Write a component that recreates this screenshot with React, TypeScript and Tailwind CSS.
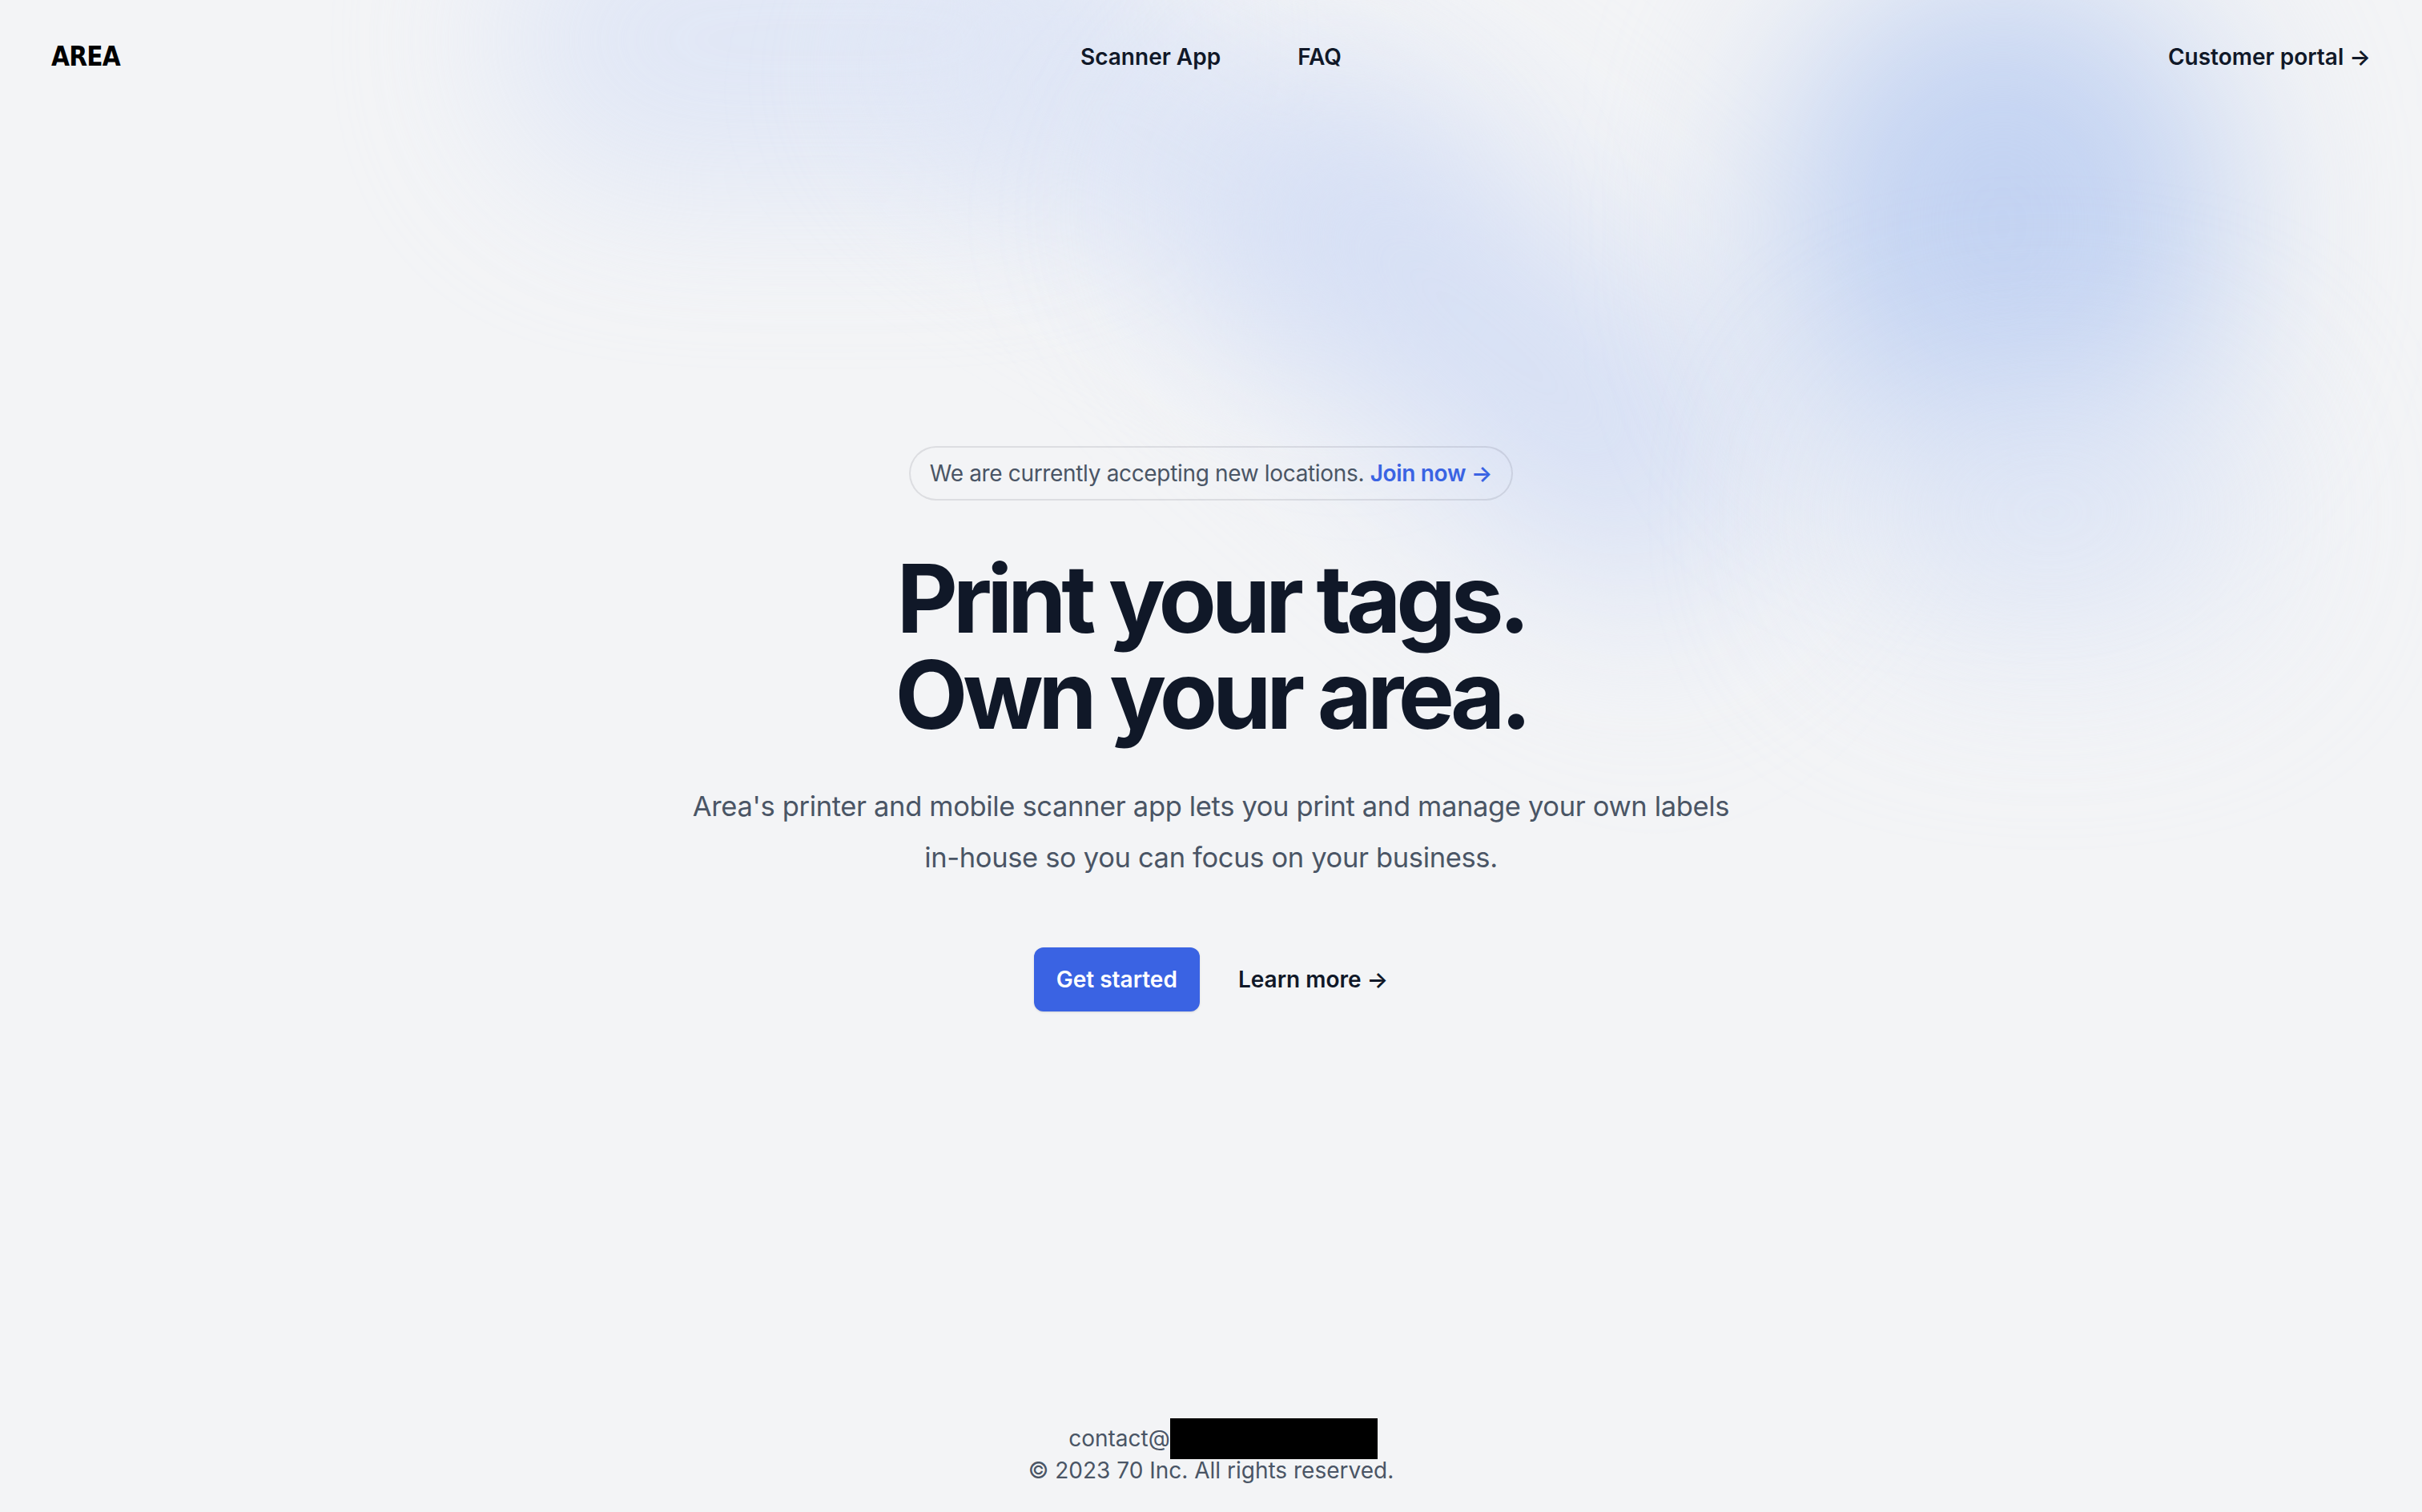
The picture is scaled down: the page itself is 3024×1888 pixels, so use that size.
import React from "react";

const navLinks = ["Scanner App", "FAQ"];

function Backdrop() {
  return (
    <div aria-hidden="true" className="pointer-events-none absolute inset-0 overflow-hidden">
      <div className="absolute left-[620px] top-[-140px] h-[380px] w-[820px] rounded-full bg-[#dce4f6] opacity-80 blur-[100px]" />
      <div className="absolute left-[1120px] top-[60px] h-[260px] w-[700px] rotate-[30deg] rounded-full bg-[#dfe6f6] blur-[100px]" />
      <div className="absolute left-[1450px] top-[260px] h-[320px] w-[820px] rotate-[40deg] rounded-full bg-[#d4def5] blur-[120px]" />
      <div className="absolute left-[2220px] top-[-40px] h-[640px] w-[560px] rounded-full bg-[#c3d3f2] blur-[110px]" />
      <div className="absolute left-[2300px] top-[480px] h-[320px] w-[520px] rounded-full bg-[#dde5f6] opacity-80 blur-[120px]" />
    </div>
  );
}

export default function App() {
  return (
    <div className="relative flex min-h-screen flex-col overflow-hidden bg-[#f3f4f6] font-['Inter','Noto_Sans',sans-serif] text-gray-900">
      <Backdrop />

      <header className="relative z-10 flex items-center justify-between px-16 pb-12 pt-[47px]">
        <div className="flex flex-1">
          <a href="#" className="font-['Liberation_Sans_Narrow','DejaVu_Sans_Condensed','Liberation_Sans',sans-serif] text-[33px] font-bold leading-[48px] tracking-tight text-black [font-stretch:condensed]">
            AREA
          </a>
        </div>
        <nav className="flex gap-x-24">
          {navLinks.map((link) => (
            <a key={link} href="#" className="text-[28px] font-semibold leading-[48px] text-gray-900">
              {link}
            </a>
          ))}
        </nav>
        <div className="flex flex-1 justify-end">
          <a href="#" className="text-[28px] font-semibold leading-[48px] text-gray-900">
            Customer portal <span aria-hidden="true">&rarr;</span>
          </a>
        </div>
      </header>

      <main className="relative z-10 flex flex-1 flex-col items-center pt-[416px]">
        <div className="mx-auto max-w-[1344px] text-center">
          <div className="mb-16 flex justify-center">
            <div className="rounded-full px-6 py-2 text-[28px] leading-[48px] tracking-[-0.012em] text-gray-600 ring-2 ring-gray-900/10">
              We are currently accepting new locations.{" "}
              <a href="#" className="font-semibold text-[#3a63e3]">
                Join now <span aria-hidden="true">&rarr;</span>
              </a>
            </div>
          </div>
          <h1 className="text-[118px] font-bold leading-[120px] tracking-[-0.053em] text-gray-900">
            Print your tags.
            <br />
            Own your area.
          </h1>
          <p className="mt-12 text-[34.5px] leading-[64px] tracking-[-0.01em] text-gray-600">
            Area's printer and mobile scanner app lets you print and manage your own labels in-house so you can focus on
            your business.
          </p>
          <div className="mt-20 flex items-center justify-center gap-x-12">
            <a href="#" className="rounded-xl bg-[#3a63e3] px-7 py-4 text-[28px] font-semibold leading-[48px] text-white shadow-sm">
              Get started
            </a>
            <a href="#" className="text-[28px] font-semibold leading-[48px] text-gray-900">
              Learn more <span aria-hidden="true">&rarr;</span>
            </a>
          </div>
        </div>
      </main>

      <footer className="relative z-10 pb-8 text-center text-[28px] leading-[40px] text-gray-600">
        <div className="flex h-10 items-center justify-center pl-[30px]">
          <span>contact@</span>
          <span className="inline-block h-[51px] w-[259px] bg-black" />
        </div>
        <p>&copy; 2023 70 Inc. All rights reserved.</p>
      </footer>
    </div>
  );
}
